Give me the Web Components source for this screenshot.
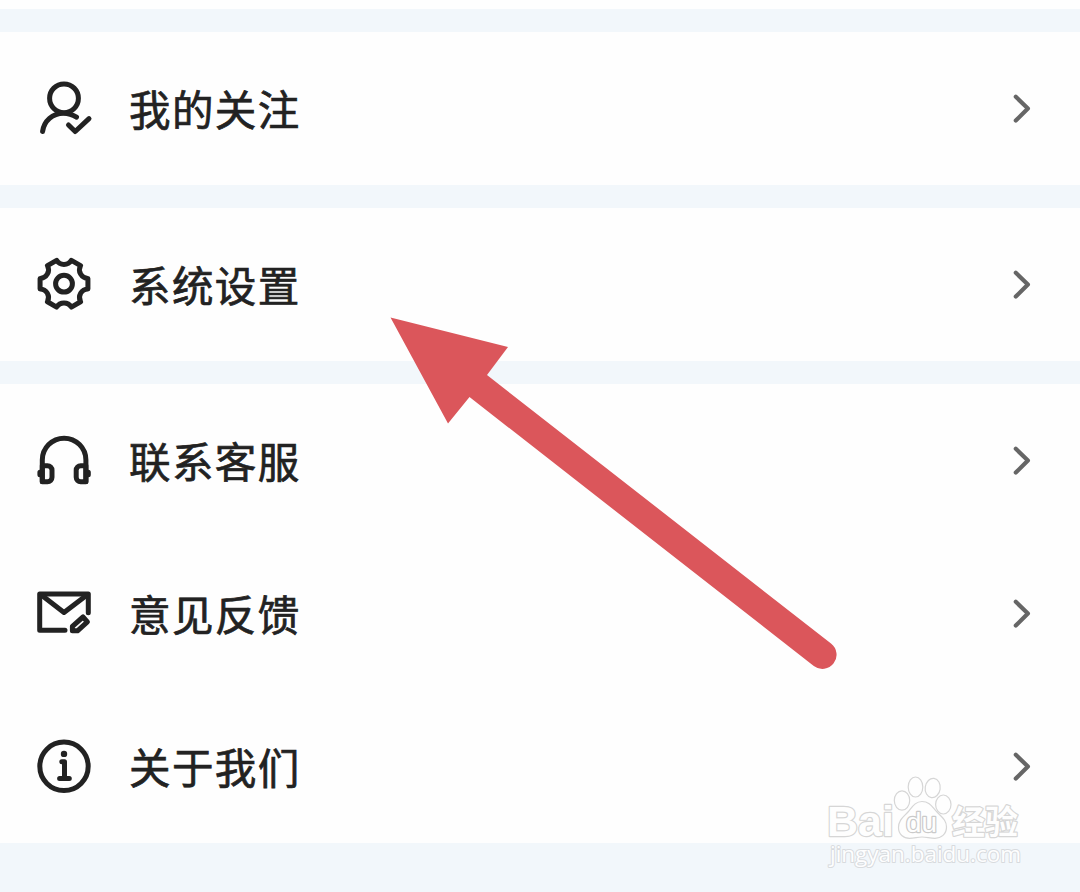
<!DOCTYPE html>
<html lang="zh-CN">
<head>
<meta charset="utf-8">
<title>我的</title>
<style>
    body {
        margin: 0;
        height: 892px;
        overflow: hidden;
        background-color: #f2f7fb;
        color: #222;
        font-family: "Noto Sans CJK SC", sans-serif;
    }
</style>
</head>
<body>

<settings-page>
    <menu-group class="first"></menu-group>
    <menu-group>
        <menu-item icon="follow">我的关注</menu-item>
    </menu-group>
    <menu-group>
        <menu-item icon="gear">系统设置</menu-item>
    </menu-group>
    <menu-group>
        <menu-item icon="headset">联系客服</menu-item>
        <menu-item icon="mail">意见反馈</menu-item>
        <menu-item icon="info">关于我们</menu-item>
    </menu-group>
    <pointer-arrow slot="overlay"></pointer-arrow>
    <site-mark slot="overlay"></site-mark>
</settings-page>

<script>
const icons = {
    follow: `
        <circle cx="30" cy="20.300" r="14.400"/>
        <path d="M8.600 53.400C10 43 18.600 35.200 29.500 35.200c4.800 0 9 1.400 13 4"/>
        <path d="M34.500 47l6.700 6.500L55 40.600"/>`,
    gear: `
        <path d="M22.630 6.330A8.600 8.600 0 0 0 37.370 6.330L46.550 11.640A8.600 8.600 0 0 0 53.920 24.400V35A8.600 8.600 0 0 0 46.550 47.760L37.370 53.070A8.600 8.600 0 0 0 22.630 53.070L13.450 47.760A8.600 8.600 0 0 0 6.080 35V24.400A8.600 8.600 0 0 0 13.450 11.640Z"/>
        <circle cx="30" cy="29.700" r="8.400"/>`,
    headset: `
        <path d="M8.300 51.500V30a21.800 21.800 0 0 1 43.600 0v21.500"/>
        <path d="M8.300 35.800h5.200a4.500 4.500 0 0 1 4.500 4.500v7a4.500 4.500 0 0 1-4.500 4.500H8.300z"/>
        <path d="M51.900 35.800h-5.200a4.500 4.500 0 0 0-4.500 4.500v7a4.500 4.500 0 0 0 4.500 4.500h5.200z"/>
        <path d="M5.900 42.200v2.600M54.300 42.200v2.600"/>`,
    mail: `
        <path d="M31 47.300H5.700V10.900H54.300V29.700"/>
        <path d="M8 12.500L30 29.500L52.300 12.500"/>
        <path d="M49 34L53.400 38.900L43.500 47.800H38.400V43.300Z"/>`,
    info: `
        <circle cx="30" cy="30.300" r="24.200"/>
        <circle cx="30" cy="17.900" r="3.200" fill="currentColor" stroke="none"/>
        <path d="M27.800 25.800H30.500V42.400M25.600 42.400H35.300"/>`
} ;

class SettingsPage extends HTMLElement {
    constructor() {
        super() ;
        this.attachShadow({mode:'open'}) ;
    }

    connectedCallback() {
        this.shadowRoot.innerHTML = `
        <style>
            :host {
                position: relative;
                display: block;
                width: 1080px;
                height: 892px;
                overflow: hidden;
            }
            .groups {
                display: flex;
                flex-direction: column;
                gap: 23px;
            }
        </style>
        <div class="groups"><slot></slot></div>
        <slot name="overlay"></slot>
        ` ;
    }
}

class MenuGroup extends HTMLElement {
    constructor() {
        super() ;
        this.attachShadow({mode:'open'}) ;
    }

    connectedCallback() {
        this.shadowRoot.innerHTML = `
        <style>
            :host {
                display: flex;
                flex-direction: column;
                background-color: #fefefe;
            }
            /* tail of the card scrolled off the top */
            :host(.first) {
                height: 9px;
            }
        </style>
        <slot></slot>
        ` ;
    }
}

class MenuItem extends HTMLElement {
    constructor() {
        super() ;
        this.attachShadow({mode:'open'}) ;
    }

    connectedCallback() {
        this.shadowRoot.innerHTML = `
        <style>
            :host {
                display: flex;
                align-items: center;
                box-sizing: border-box;
                height: 153px;
                padding: 0 49px 0 34px;
            }
            svg {
                flex: none;
                fill: none;
                stroke: currentColor;
                stroke-linecap: round;
                stroke-linejoin: round;
            }
            .icon {
                width: 60px;
                height: 61px;
                stroke-width: 5;
            }
            .label {
                flex: 1;
                margin-left: 35px;
                padding-bottom: 1px;
                font-size: 41.5px;
                line-height: 60px;
                letter-spacing: 1.4px;
                -webkit-text-stroke: 0.7px currentColor;
            }
            .chevron {
                width: 18px;
                height: 31px;
                color: #666;
                stroke-width: 4.2;
            }
        </style>
        <svg class="icon" viewBox="0 0 60 61">${icons[this.getAttribute('icon')]}</svg>
        <div class="label"><slot></slot></div>
        <svg class="chevron" viewBox="0 0 18 31"><path d="M2.800 3.800L14.900 15.500L2.800 27.600"/></svg>
        ` ;
    }
}

class PointerArrow extends HTMLElement {
    constructor() {
        super() ;
        this.attachShadow({mode:'open'}) ;
    }

    connectedCallback() {
        this.shadowRoot.innerHTML = `
        <style>
            :host {
                position: absolute;
                left: 390px;
                top: 317px;
                width: 448px;
                height: 354px;
                pointer-events: none;
            }
            svg {
                display: block;
            }
        </style>
        <svg width="448" height="354" viewBox="390 317 448 354">
            <path fill="#db565b" d="M390.500 317.500L508 347L487 375L831 643.500A14 14 0 0 1 813.800 666L469.500 397L448 423.500Z"/>
        </svg>
        ` ;
    }
}

class SiteMark extends HTMLElement {
    constructor() {
        super() ;
        this.attachShadow({mode:'open'}) ;
    }

    connectedCallback() {
        this.shadowRoot.innerHTML = `
        <style>
            :host {
                position: absolute;
                left: 820px;
                top: 770px;
                width: 210px;
                height: 105px;
                pointer-events: none;
            }
            svg {
                display: block;
                fill: #fefefe;
                stroke: #d6d6d6;
                stroke-width: 1.2;
            }
            text {
                paint-order: stroke;
                stroke-width: 2.4;
                stroke-linejoin: round;
            }
            .latin {
                font: bold 43px "Liberation Sans", sans-serif;
            }
            .du {
                font: 27px "Liberation Sans", sans-serif;
                stroke: #cacaca;
            }
            .cjk {
                font: 700 33px "Noto Sans CJK SC", sans-serif;
            }
            .url {
                font: 22px "Open Sans", sans-serif;
                stroke: #d8dbde;
                stroke-width: 2;
            }
        </style>
        <svg width="210" height="105" viewBox="820 770 210 105">
            <text class="latin" x="827" y="836" textLength="67" lengthAdjust="spacingAndGlyphs">Bai</text>
            <ellipse cx="902" cy="800.500" rx="7.700" ry="9.700"/>
            <ellipse cx="915.500" cy="787" rx="7.300" ry="10"/>
            <ellipse cx="932.700" cy="788" rx="7.500" ry="9.700" transform="rotate(8 932.700 788)"/>
            <ellipse cx="943.300" cy="804.500" rx="7.700" ry="9.500"/>
            <path d="M922 801.500c-7 0-10 6-14 10.500c-4.500 5-9.500 8-9.500 15.500c0 7 5 10.800 11 10.800c5 0 8-1.300 12.500-1.300c4.500 0 8 1.300 13 1.300c6 0 11.500-4 11.500-11.300c0-7-5-10-9.500-15c-4.500-4.500-7-10.500-15-10.500z"/>
            <text class="du" x="906" y="832" textLength="31" lengthAdjust="spacingAndGlyphs">du</text>
            <text class="cjk" x="952" y="834" textLength="66" lengthAdjust="spacingAndGlyphs">经验</text>
            <text class="url" x="830" y="862" textLength="191" lengthAdjust="spacingAndGlyphs">jingyan.baidu.com</text>
        </svg>
        ` ;
    }
}

customElements.define('settings-page', SettingsPage) ;
customElements.define('menu-group', MenuGroup) ;
customElements.define('menu-item', MenuItem) ;
customElements.define('pointer-arrow', PointerArrow) ;
customElements.define('site-mark', SiteMark) ;
</script>
</body>
</html>
